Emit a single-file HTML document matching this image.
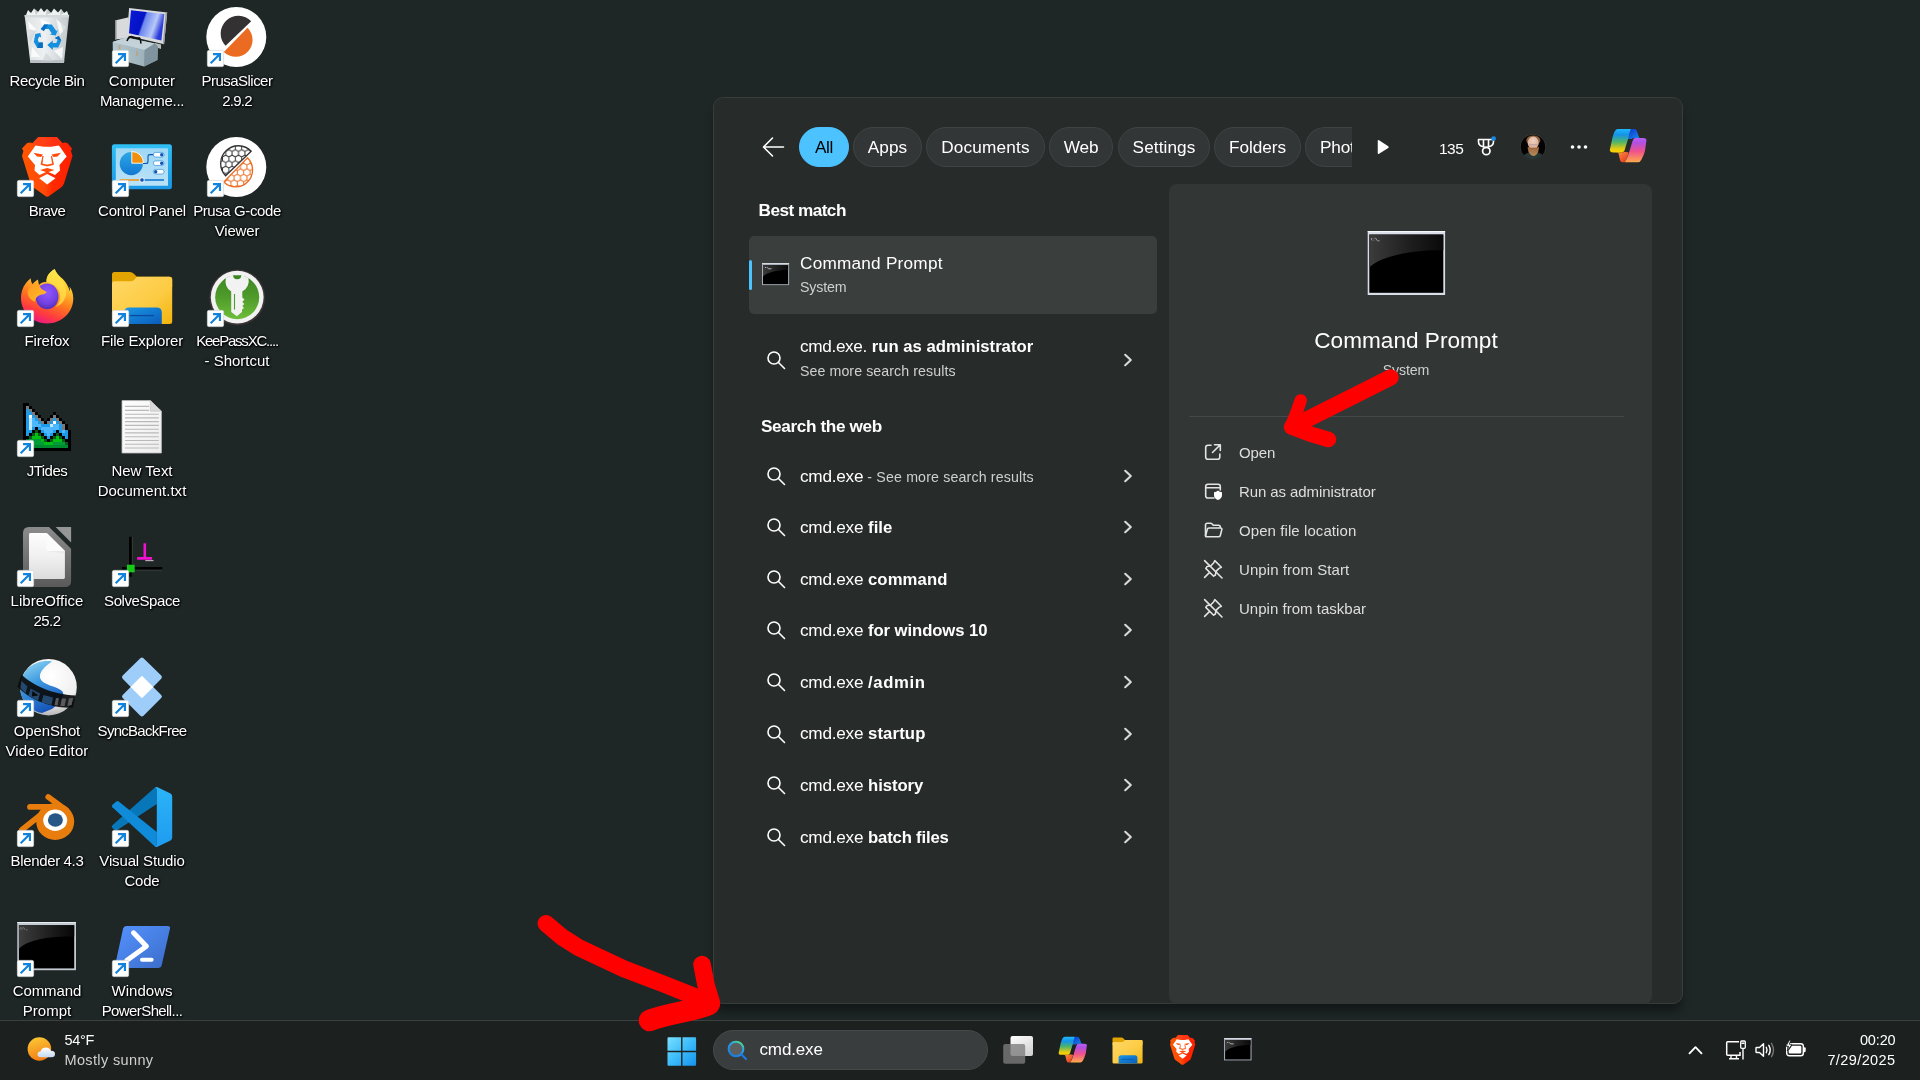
<!DOCTYPE html>
<html lang="en"><head><meta charset="utf-8"><title>Desktop - Search cmd.exe</title>
<style>
*{box-sizing:border-box;margin:0;padding:0}
html,body{width:1920px;height:1080px;overflow:hidden;background:#1e2626}
body{font-family:"Liberation Sans",sans-serif;color:#fff;-webkit-font-smoothing:antialiased}
#desk{position:relative;width:1920px;height:1080px;overflow:hidden;will-change:transform}
.abs{position:absolute}
svg{display:block;overflow:visible}
symbol{overflow:visible}
/* desktop icons */
.di{position:absolute;width:96px;height:110px}
.di .ic{position:absolute;left:18px;top:0;width:60px;height:60px}
.di .ic svg{width:60px;height:60px}
.di .sc{position:absolute;left:19px;top:43px;width:17px;height:17px}
.di .lb{position:absolute;left:-9px;width:116px;top:64px;text-align:center;font-size:15px;line-height:20px;color:#fff;text-shadow:0 1px 2px #000,1px 1px 2px #000,0 0 3px rgba(0,0,0,.8);white-space:nowrap}
/* search panel */
#panel{position:absolute;left:713px;top:97px;width:970px;height:907px;background:#272b2a;border-radius:10px;border:1px solid #383c3b;box-shadow:0 9px 10px -2px rgba(0,0,0,.4)}
#card{position:absolute;left:1169px;top:184px;width:483px;height:819.5px;background:#323635;border-radius:8px}
.pill{position:absolute;top:127px;height:40px;border-radius:20px;background:#333636;border:1px solid #3f4343;font-size:17.2px;line-height:38px;text-align:center;color:#fff;white-space:nowrap;overflow:hidden}
.pill.on{background:#4cc2ff;border-color:#4cc2ff;color:#000}
.t{position:absolute;white-space:nowrap;line-height:1}
.hd{font-weight:bold;font-size:17.2px}
.r1{font-size:17.2px}
.r2{font-size:14.2px;color:#cfd0d0}
.act{font-size:15px;color:#dedede}
b{font-weight:bold;font-size:16.7px}
/* taskbar */
#tb{position:absolute;left:0;top:1020px;width:1920px;height:60px;background:#1c201f;border-top:1px solid #3b3f3e}
#sbox{position:absolute;left:713px;top:1030px;width:275px;height:40px;border-radius:20px;background:#3a3d3d;border:1px solid #464949}
.tt{font-size:14.5px}

</style></head>
<body>
<svg width="0" height="0" style="position:absolute"><defs>
<linearGradient id="g-bin" x1="0" y1="0" x2="1" y2="0"><stop offset="0" stop-color="#dde1e3"/><stop offset=".45" stop-color="#eef1f2"/><stop offset="1" stop-color="#bfc5c8"/></linearGradient>
<symbol id="i-recycle" viewBox="0 0 60 60">
<path d="M10 8 L12 3 L15 6 L18 1.5 L22 5 L25 1 L28 5 L31 2 L35 6 L38 1.5 L42 5.5 L45 2 L48 6 L51 4 L52.5 8 Z" fill="#eef1f2"/>
<path d="M18 1.5 L22 5 L20 8 Z M31 2 L35 6 L30 8Z M45 2 L48 6 L44 8Z" fill="#c5cacc"/>
<path d="M8.6 8 L53.2 8 L48 55.5 L14.3 55.5 Z" fill="url(#g-bin)"/>
<path d="M8.6 8 L53.2 8 L52.9 10.5 L8.9 10.5 Z" fill="#d4d9db"/>
<path d="M14 53 L48.3 53 L48 56 L14.3 56 Z" fill="#b9bfc2"/>
<path d="M12 14 L20 22 L14 30 Z M40 12 L50 20 L44 28 Z M16 40 L24 50 L15 50 Z M38 44 L47 40 L46 52 Z M24 12 L34 16 L27 22Z" fill="#fff" opacity=".8"/>
<path d="M44 14 L51 12 L49 30 Z M20 24 L14 36 L13 22Z M30 46 L38 54 L26 54Z" fill="#cdd3d6" opacity=".7"/>
<g transform="translate(30.8 31)">
<path d="M-6 -9 L-2.5 -13.5 L5 -13.5 L9.5 -7 L11 -8 L9 -2.5 L3 -3.5 L5 -4.5 L2 -9 L-1.5 -9 L-3 -7 Z" fill="#1490df"/>
<path d="M-6 -9 L-2.5 -13.5 L1.5 -13.5 L-3 -7 Z" fill="#0a6fc2"/>
<path d="M-6.5 -5 L-11.5 -4 L-13 4 L-9.5 10 L-4 10 L-4 4.5 L-8 4.5 L-9 1.5 L-7.5 -1.5 L-5.5 -0.5 Z" fill="#1490df"/>
<path d="M-9.500 10 L-4 10 L-4 4.5 L-8 4.5 Z" fill="#0a6fc2"/>
<path d="M0.500 7 L6 2.500 L6 5 L9.500 5 L11 1.500 L8 0 L12 -2 L14.500 2.500 L11.500 9.500 L6 9.500 L6 12 Z" fill="#1490df"/>
<path d="M8 0 L12 -2 L14.500 2.500 L11 1.500 Z" fill="#0a6fc2"/>
</g>
</symbol>
<linearGradient id="g-scr" x1="0" y1="0" x2="1" y2="0.3"><stop offset="0" stop-color="#0a1bd8"/><stop offset=".45" stop-color="#0512c4"/><stop offset=".5" stop-color="#6a86ee"/><stop offset=".8" stop-color="#b8c8f8"/><stop offset="1" stop-color="#2a3ad8"/></linearGradient>
<linearGradient id="g-tb" x1="0" y1="0" x2="1" y2="0"><stop offset="0" stop-color="#b4c6cd"/><stop offset=".7" stop-color="#9db2bb"/><stop offset="1" stop-color="#6f858f"/></linearGradient>
<symbol id="i-compmgmt" viewBox="0 0 60 60">
<path d="M4 13.500 L17.700 10.300 L17.700 31 L4 32.500 Z" fill="#d8dadb"/><path d="M4 13.500 L5.500 13.200 L5.500 32.300 L4 32.500Z" fill="#8d9092"/>
<path d="M18.100 1 L56.200 5.400 L53.100 37.300 L15.900 28.400 Z" fill="#d9dbdc"/>
<path d="M54.700 5.200 L56.200 5.400 L53.100 37.300 L51.800 37 Z" fill="#9a9d9e"/>
<path d="M20 3.200 L53.300 7.100 L50.400 33.500 L18 26.300 Z" fill="url(#g-scr)"/>
<path d="M44 36 L50 37.500 L50 42 L44 40 Z" fill="#b9bcbd"/>
<path d="M1.700 35 L15 30.500 L44 36.500 L47 40 L46.500 53 L33 59.500 L1.900 51 Z" fill="url(#g-tb)"/>
<path d="M1.700 35 L15 30.500 L44 36.500 L33.500 43 Z" fill="#c3d2d8"/>
<path d="M33.500 43 L44 36.500 L47 40 L46.500 53 L33 59.500 Z" fill="#7f949e"/>
<path d="M16 34 Q18 28.500 22 30 Q26 31.500 28.500 31 Q30.500 35 29.500 36.500" stroke="#111" stroke-width="1.6" fill="none"/>
<rect x="7.500" y="38.500" width="2" height="4" fill="#b7a58c"/><rect x="25" y="44" width="2" height="5" fill="#b7a58c"/>
</symbol>
<symbol id="i-prusa" viewBox="0 0 60 60">
<circle cx="30.300" cy="30" r="30" fill="#fff"/>
<path d="M19.600 38.800 A16 16 0 0 1 45.200 14.200 Z" fill="#333132"/>
<path d="M41.500 20.800 A16.500 16.500 0 0 1 17.800 45 Z" fill="#ec6b22"/>
</symbol>
<pattern id="p-hexd" width="6.400" height="11.085" patternUnits="userSpaceOnUse" patternTransform="translate(0.500 1.500)"><path d="M3.200 0 L6.400 1.848 L6.400 5.543 L3.200 7.390 L0 5.543 L0 1.848 Z M3.200 7.390 V11.085" stroke="#333132" stroke-width="1" fill="none"/></pattern>
<pattern id="p-hexo" width="6.400" height="11.085" patternUnits="userSpaceOnUse" patternTransform="translate(2.500 4)"><path d="M3.200 0 L6.400 1.848 L6.400 5.543 L3.200 7.390 L0 5.543 L0 1.848 Z M3.200 7.390 V11.085" stroke="#ec6b22" stroke-width="1" fill="none"/></pattern>
<symbol id="i-gcode" viewBox="0 0 60 60">
<circle cx="30.300" cy="30" r="30" fill="#fff"/>
<path d="M19.600 38.800 A16 16 0 0 1 45.200 14.200 Z" fill="url(#p-hexd)" stroke="#333132" stroke-width="1.300"/>
<path d="M41.500 20.800 A16.500 16.500 0 0 1 17.800 45 Z" fill="url(#p-hexo)" stroke="#ec6b22" stroke-width="1.300"/>
</symbol>
<linearGradient id="g-brave" x1="0" y1="0" x2="1" y2="0"><stop offset="0" stop-color="#ff5500"/><stop offset=".45" stop-color="#ff4a08"/><stop offset=".6" stop-color="#ff2a00"/><stop offset="1" stop-color="#ff1f00"/></linearGradient>
<symbol id="i-brave" viewBox="0 0 60 60">
<path d="M22.300 0 L40.900 0 L46.300 6 Q49 4.800 51.600 6.300 L56 11.500 L55 14 L56.500 19 L48 46.500 Q47 49 45 50.500 L33.500 58.800 Q31.200 60.500 29 58.800 L17.500 50.500 Q15.400 49 14.500 46.500 L6 19 L7.400 14 L6 11.500 L10.800 6.300 Q13.500 4.800 16.600 6 Z" fill="url(#g-brave)"/>
<path d="M22.300 0 L40.900 0 L46.300 6 L41 9 L21.500 9 L16.600 6 Z" fill="#ff3b1f" opacity=".6"/>
<path d="M27.500 9.800 L35 9.800 L43 8.500 L50.700 19.500 L43.500 28 L44 33.500 L39 38 L31.200 34.500 L23.500 38 L18.500 33.500 L19 28 L11.800 19.500 L19.500 8.500 Z" fill="#fff"/>
<path d="M23.200 41.200 L31.200 37 L39.500 41.200 L31.200 47.500 Z" fill="#fff"/>
<path d="M17.500 15.800 L27 17.500 L25 20 L21 19.500 Z M45 15.800 L35.500 17.500 L37.500 20 L41.500 19.500 Z" fill="#ff4a08"/>
<path d="M27 19 L25 27.500 L31.200 29 L37.500 27.500 L35.500 19 L36.500 27 L31.200 28 L26 27 Z" fill="#ff4a08" stroke="#ff4a08" stroke-width=".8"/>
<path d="M24 33 L31.200 31 L38.500 33 L31.200 35.500 Z" fill="#ff4a08"/>
</symbol>
<linearGradient id="g-cpf" x1="0" y1="0" x2="0" y2="1"><stop offset="0" stop-color="#2fc0f5"/><stop offset="1" stop-color="#1a96e4"/></linearGradient>
<linearGradient id="g-cpi" x1="0" y1="0" x2="0" y2="1"><stop offset="0" stop-color="#9fd8f4"/><stop offset="1" stop-color="#b9e2f7"/></linearGradient>
<linearGradient id="g-pie" x1="0" y1="0" x2="0" y2="1"><stop offset="0" stop-color="#2aa8e8"/><stop offset="1" stop-color="#1278d2"/></linearGradient>
<symbol id="i-cpanel" viewBox="0 0 60 60">
<rect x="0.900" y="7.200" width="60" height="45" rx="2.500" fill="url(#g-cpf)"/>
<rect x="4.800" y="11.200" width="52.200" height="37.600" rx="0.500" fill="url(#g-cpi)"/>
<circle cx="20.300" cy="26.600" r="11.600" fill="url(#g-pie)"/>
<path d="M20.800 26.200 L20.800 14.500 A11.700 11.700 0 0 1 32.500 26.200 Z" fill="#f0900c" stroke="#fff" stroke-width=".9"/>
<path d="M32 26.500 H35 Q37 26.500 37 24.500 V19.500 Q37 17.600 39 17.600 H43" stroke="#0c55b5" stroke-width="1.100" fill="none"/>
<rect x="42.300" y="15.400" width="10.800" height="4.600" rx="2.300" fill="#fff" stroke="#1b7fd8" stroke-width=".6"/><circle cx="50.700" cy="17.700" r="1.700" fill="#0c55b5"/>
<rect x="42.300" y="23.900" width="10.800" height="4.600" rx="2.300" fill="#fff" stroke="#1b7fd8" stroke-width=".6"/><circle cx="50.700" cy="26.200" r="1.700" fill="#0c55b5"/>
<rect x="42.300" y="32.400" width="10.800" height="4.600" rx="2.300" fill="#fff" stroke="#1b7fd8" stroke-width=".6"/><circle cx="44.700" cy="34.700" r="1.700" fill="#0c55b5"/>
<path d="M8.800 43 H31" stroke="#f0900c" stroke-width="1.500"/><path d="M31 43 H53" stroke="#0c6fd0" stroke-width="1.500"/>
<circle cx="31" cy="43" r="2.300" fill="#0c55b5" stroke="#fff" stroke-width=".9"/>
</symbol>
<linearGradient id="g-ff" x1="0.7" y1="0" x2="0.3" y2="1"><stop offset="0" stop-color="#fff44f"/><stop offset=".3" stop-color="#ffbd2e"/><stop offset=".55" stop-color="#ff7a1c"/><stop offset=".8" stop-color="#ff3a40"/><stop offset="1" stop-color="#e6168c"/></linearGradient>
<radialGradient id="g-ffg" cx="0.5" cy="0.35" r="0.7"><stop offset="0" stop-color="#9059ff"/><stop offset=".6" stop-color="#7542e5"/><stop offset="1" stop-color="#4a2aa8"/></radialGradient>
<linearGradient id="g-ffh" x1="0" y1="0" x2="1" y2="1"><stop offset="0" stop-color="#ff9a1f"/><stop offset="1" stop-color="#ffbd2e"/></linearGradient>
<symbol id="i-firefox" viewBox="0 0 60 60">
<path d="M38.700 1.900 C33 5 30 10 30.500 15 C27 14.500 24 16.500 23 18 L21.900 12.500 C20 13.500 17.500 15.500 16.500 17.500 C15.500 15.500 14.800 13.500 14.800 11.200 C9 15.500 5 22.500 5 31 C5 45.500 17 56.500 31.200 56.500 C45.500 56.500 57.300 45.500 57.300 31.500 C57.300 26 55.500 22 53.500 19.500 C54 21.500 54 23 53.800 24.500 C52 17 47.500 12.500 44 9.500 C41.500 7 39.500 4.500 38.700 1.900 Z" fill="url(#g-ff)"/>
<path d="M38.700 1.900 C33 5 30 10 30.500 15 C35 15.500 40 18 42.500 22.500 C45.500 28 44.500 35.500 39.500 40 C46 38 51.500 31.500 50 22 C48.500 15.500 42 10.500 38.700 1.900 Z" fill="#ffe14a" opacity=".75"/>
<ellipse cx="31" cy="29.400" rx="11.500" ry="12.800" fill="url(#g-ffg)"/>
<path d="M16.100 16.900 C19 16.300 21.500 17.300 23.200 18.700 C24.500 20 25 21.500 25.900 22.200 C27.500 23.500 29.800 23.800 30.700 25.300 C29 27.300 26 27.500 24.100 28 C22 28.800 20.500 30 20.100 31.100 C19.300 32.500 19.100 33.500 19.300 35 C14.500 33 12 30 11.700 26.600 C11.500 25 11.800 24 12.200 23.100 C13.500 21.500 14.500 19 16.100 16.900 Z" fill="url(#g-ffh)"/>
</symbol>
<linearGradient id="g-fold" x1="0" y1="0" x2="1" y2="1"><stop offset="0" stop-color="#ffd866"/><stop offset=".6" stop-color="#fccb42"/><stop offset="1" stop-color="#f3b30c"/></linearGradient>
<linearGradient id="g-fpk" x1="0" y1="0" x2="1" y2="1"><stop offset="0" stop-color="#1a98e6"/><stop offset="1" stop-color="#0a5cba"/></linearGradient>
<symbol id="i-explorer" viewBox="0 0 60 60">
<path d="M1 7.500 Q1 5 3.500 5 L19 5 Q21 5 22.500 6.500 L26 9.800 L58.500 9.800 Q61.200 9.800 61.200 12.500 L61.200 20 L1 20 Z" fill="#e3a400"/>
<path d="M1 16.500 Q1 14.200 3.500 14.200 L19.500 14.200 Q21.500 14.200 23 13 L26 9.800 L58.500 9.800 Q61.200 9.800 61.200 12.500 L61.200 54.400 Q61.200 56.900 58.700 56.900 L3.500 56.900 Q1 56.900 1 54.400 Z" fill="url(#g-fold)"/>
<path d="M13.200 56.900 L13.200 45.500 Q13.200 40.400 18.300 40.400 L45.700 40.400 Q50.800 40.400 50.800 45.500 L50.800 56.900 Z" fill="url(#g-fpk)"/>
<path d="M18.500 48.600 H43" stroke="#0a4a9c" stroke-width="1.300"/>
</symbol>
<linearGradient id="g-kp" x1="0" y1="0" x2="0" y2="1"><stop offset="0" stop-color="#3d8623"/><stop offset=".5" stop-color="#4f9b2b"/><stop offset="1" stop-color="#6ebd3a"/></linearGradient>
<symbol id="i-keepass" viewBox="0 0 60 60">
<circle cx="31.200" cy="30.500" r="28" fill="#3a3434"/>
<circle cx="31.200" cy="30.200" r="26.400" fill="#f2f2f2"/>
<circle cx="31.200" cy="30.200" r="22" fill="url(#g-kp)"/>
<path d="M20 11 A11.800 11.800 0 0 0 25.200 24.500 L25.200 45 L30.800 49.300 L36 45 L36 42.500 L38 41 L36.300 39 L38.300 37 L36.300 35 L38.500 32.500 L36.300 30.500 L36.300 24.500 A11.800 11.800 0 0 0 42.400 11 A22 22 0 0 0 20 11 Z" fill="#f2f2f2"/>
<path d="M27.100 8.200 A4.100 4.100 0 0 0 35.300 8.200 Z" fill="#3d8623"/>
<path d="M28.500 27 V42.600" stroke="#4f9b2b" stroke-width="1.100"/>
</symbol>
<linearGradient id="g-pg" x1="0" y1="0" x2="1" y2="1"><stop offset="0" stop-color="#ffffff"/><stop offset="1" stop-color="#ececec"/></linearGradient>
<symbol id="i-textdoc" viewBox="0 0 60 60">
<path d="M11 3.600 L39.300 3.600 L50.400 14.200 L50.400 56 L11 56 Z" fill="url(#g-pg)" stroke="#bdbdbd" stroke-width=".8"/>
<path d="M39.300 3.600 L39.300 14.200 L50.400 14.200 Z" fill="#d9d9d9" stroke="#bdbdbd" stroke-width=".6"/>
<path d="M14 9.400 H38 M14 13.400 H38 M14 17.300 H47.800 M14 20.900 H47.800 M14 24.600 H47.800 M14 28.400 H47.800 M14 32.200 H47.800 M14 35.900 H47.800 M14 39.700 H47.800 M14 43.500 H47.800 M14 47.200 H47.800 M14 51 H47.800" stroke="#b9b9b9" stroke-width="1.100"/>
</symbol>
<linearGradient id="g-lo" x1="0" y1="0" x2="0" y2="1"><stop offset="0" stop-color="#8c8c8c"/><stop offset="1" stop-color="#5a5a5a"/></linearGradient>
<linearGradient id="g-lop" x1="0" y1="0" x2="0" y2="1"><stop offset="0" stop-color="#fdfdfd"/><stop offset=".5" stop-color="#f1f1f1"/><stop offset="1" stop-color="#dcdcdc"/></linearGradient>
<symbol id="i-libre" viewBox="0 0 60 60">
<path d="M13 0 L33 0 L55.100 21.800 L55.100 54 Q55.100 60 49 60 L13 60 Q7 60 7 54 L7 6 Q7 0 13 0 Z" fill="url(#g-lo)"/>
<path d="M39.600 0 L55.100 0 L55.100 15.600 Z" fill="#969696"/>
<path d="M14.500 6.100 L30.700 6.100 L48.900 24 L48.900 50.500 Q48.900 51.900 47.500 51.900 L14.500 51.900 Q13 51.900 13 50.500 L13 7.500 Q13 6.100 14.500 6.100 Z" fill="url(#g-lop)"/>
<path d="M30.700 6.100 L30.700 22 Q30.700 24 32.700 24 L48.900 24 Z" fill="#fbfbfb"/>
<path d="M30.700 24 L48.900 24 L48.900 27 Z" fill="#e4e4e4" opacity=".6"/>
</symbol>
<symbol id="i-solvespace" viewBox="0 0 60 60">
<path d="M19.400 9.800 V49.700 M11 41.300 H51.300" stroke="#000" stroke-width="2.600"/>
<path d="M21.500 9.800 V37 M24 43.400 H51.300" stroke="#3c3c3c" stroke-width=".8"/>
<rect x="15.900" y="37.700" width="7.800" height="7.600" fill="#18c818"/>
<path d="M34.300 33.600 H42.500" stroke="#b9a8b9" stroke-width="1.200"/>
<path d="M33.800 16.200 V31.500 M26.100 31.400 H41.100" stroke="#f010d0" stroke-width="2.600"/>
</symbol>
<radialGradient id="g-os" cx="0.55" cy="0.3" r="0.75"><stop offset="0" stop-color="#ffffff"/><stop offset=".65" stop-color="#f0f0f0"/><stop offset="1" stop-color="#a8a8a8"/></radialGradient>
<linearGradient id="g-osb" x1="0.2" y1="0" x2="0.6" y2="1"><stop offset="0" stop-color="#8fd4f2"/><stop offset=".4" stop-color="#3f9be0"/><stop offset="1" stop-color="#1450b8"/></linearGradient>
<clipPath id="c-os"><circle cx="32.500" cy="30.200" r="28.300"/></clipPath>
<symbol id="i-openshot" viewBox="0 0 60 60">
<circle cx="32.500" cy="30.200" r="28.300" fill="url(#g-os)"/>
<g clip-path="url(#c-os)">
<path d="M36 4.500 C28 10 22 16 24.500 22 C27 28 40 29 46 34 C50 38 44 46 36 52 L26 56 C14 54 2 42 4 28 C6 12 20 2 36 4.500 Z" fill="url(#g-osb)"/>
</g>
<path d="M5.500 17.500 C16 28 36 37.500 59.500 38.500 L57 50.500 C36 52 12 42 1.500 29.500 Z" fill="#0b0b0b" opacity=".92"/>
<path d="M5.500 24 L11.500 29.500 L9.500 36.500 L4.500 31 Z M14.500 31.500 L24 36.500 L22 44 L12.500 38.500 Z M27.500 38 L37 40.500 L35.500 48 L25.500 45.500 Z M46 41.500 L50 41.800 L48.500 49 L44.500 49 Z M53 41.500 L57 41 L55.500 48 L51.500 48.800 Z" fill="#24496e"/>
<path d="M46 41.500 L50 41.800 L48.500 49 L44.500 49 Z M53 41.500 L57 41 L55.500 48 L51.500 48.800 Z M40 41 L43 41.300 L41.500 48.600 L38.500 48.300 Z" fill="#5a5a5a"/>
<path d="M16.500 34 L22.500 38.500 L15.800 39.500 Z" fill="#0b0b0b"/>
</symbol>
<symbol id="i-syncback" viewBox="0 0 60 60">
<path d="M29.300 1.300 Q30.900 -0.300 32.500 1.300 L50.200 18.600 Q51.800 20.200 50.200 21.800 L32.500 39.700 Q30.900 41.300 29.300 39.700 L11.700 21.800 Q10.100 20.200 11.700 18.600 Z" fill="#9fcdf9"/>
<path d="M29.300 20.300 Q30.900 18.700 32.500 20.300 L50.200 37.900 Q51.800 39.500 50.200 41.100 L32.500 58.700 Q30.900 60.300 29.300 58.700 L11.700 41.100 Q10.100 39.500 11.700 37.900 Z" fill="#9fcdf9"/>
<path d="M30.900 18.700 L42.300 30 L30.900 41.300 L19.600 30 Z" fill="#fff"/>
</symbol>
<symbol id="i-blender" viewBox="0 0 60 60">
<g stroke="#e87d0d" stroke-width="5.800" stroke-linecap="round" fill="none"><path d="M32.300 10 L50 23"/><path d="M14 19.900 H38"/><path d="M6 42.800 L27 26"/></g>
<ellipse cx="39.200" cy="34.600" rx="19" ry="18.400" fill="#e87d0d"/>
<ellipse cx="39.200" cy="33.300" rx="12" ry="10.700" fill="#fff"/>
<ellipse cx="39.400" cy="33" rx="7.500" ry="6.700" fill="#265787"/>
</symbol>
<linearGradient id="g-vs1" x1="0" y1="0" x2="0" y2="1"><stop offset="0" stop-color="#2bb3f7"/><stop offset="1" stop-color="#1f9cf0"/></linearGradient>
<symbol id="i-vscode" viewBox="0 0 60 60">
<path d="M44.200 0.200 L45.800 1 L45.800 17 L6 43.200 Q4.500 44 3.300 42.800 L1.200 40.800 Q0 39.500 1.400 38.200 Z" fill="#0877b9"/>
<path d="M1.400 20.200 Q0.200 19 1.500 17.800 L5.300 14.600 Q6.600 13.600 8 14.700 L45.800 45 L45.800 59 L44.200 59.800 Z" fill="#0f8bd9"/>
<path d="M44.200 0.200 Q45.200 -0.300 46.500 0.300 L59.500 6.600 Q61.200 7.500 61.200 9.500 L61.200 50.500 Q61.200 52.500 59.500 53.400 L46.500 59.700 Q45.200 60.300 44.200 59.800 L45.800 58 L45.800 2 Z" fill="url(#g-vs1)"/>
</symbol>
<linearGradient id="g-cmd" x1="0" y1="0" x2="1" y2="0"><stop offset="0" stop-color="#3e3e3e"/><stop offset=".6" stop-color="#1c1c1c"/><stop offset="1" stop-color="#060606"/></linearGradient>
<symbol id="i-cmd" viewBox="0 0 60 60">
<rect x="1.300" y="5" width="58.700" height="48.200" fill="#c3cad2"/>
<rect x="1.300" y="5" width="58.700" height="1" fill="#e9edf1"/>
<rect x="2.900" y="8.200" width="55.300" height="43.200" fill="#000"/>
<path d="M2.900 8.200 H58.200 V19.600 C30 19 10 24 2.900 32 Z" fill="url(#g-cmd)"/>
<path d="M4.500 10.500 L3.800 11.500 L4.500 12.500 M6 10.300 V12.700 M7.500 10.300 L9 12.700 M10 12.900 H11.500" stroke="#aaa" stroke-width=".6" fill="none"/>
</symbol>
<linearGradient id="g-ps" x1="0" y1="0" x2="1" y2="1"><stop offset="0" stop-color="#5593ff"/><stop offset="1" stop-color="#3a6cc8"/></linearGradient>
<symbol id="i-pshell" viewBox="0 0 60 60">
<path d="M15.300 8.900 L56.800 8.900 Q59.600 8.900 59 11.600 L50.700 48.300 Q50 51 47.200 51 L6.300 51 Q3.500 51 4.100 48.300 L12.100 11.600 Q12.700 8.900 15.300 8.900 Z" fill="url(#g-ps)"/>
<path d="M22.500 15.800 L35.400 29.300 L16 43.300" stroke="#fff" stroke-width="5" fill="none" stroke-linecap="round" stroke-linejoin="round"/>
<path d="M31 42.800 H40.600" stroke="#fff" stroke-width="4" stroke-linecap="round"/>
</symbol>
<symbol id="i-shortcut" viewBox="0 0 18 18"><rect x="0.4" y="0.4" width="17.2" height="17.2" rx="1.6" fill="#fff" stroke="#d6dade" stroke-width=".8"/><path d="M3.900 14.100 L12.900 5.100 M6.400 4.300 H13.700 V11.600" stroke="#1183dd" stroke-width="2.300" fill="none"/></symbol>
<symbol id="i-back" viewBox="0 0 23 22"><path d="M21.5 11 H2 M10.5 2 L1.5 11 L10.5 20" stroke="#fff" stroke-width="1.6" fill="none" stroke-linecap="round" stroke-linejoin="round"/></symbol>
<symbol id="i-play" viewBox="0 0 16 18"><path d="M2 2.2 Q2 0.6 3.5 1.4 L14 8 Q15.2 9 14 10 L3.5 16.6 Q2 17.4 2 15.8 Z" fill="#fff"/></symbol>
<symbol id="i-dots" viewBox="0 0 18 6"><circle cx="2.5" cy="3" r="1.8" fill="#fff"/><circle cx="9" cy="3" r="1.8" fill="#fff"/><circle cx="15.5" cy="3" r="1.8" fill="#fff"/></symbol>
<symbol id="i-search" viewBox="0 0 20 20"><circle cx="8" cy="8" r="6" stroke="#fff" stroke-width="1.6" fill="none"/><path d="M12.5 12.5 L18.5 18.5" stroke="#fff" stroke-width="1.6" stroke-linecap="round"/></symbol>
<symbol id="i-chev" viewBox="0 0 12 16"><path d="M3.200 2.800 L8.800 8 L3.200 13.200" stroke="#dadada" stroke-width="2.100" fill="none" stroke-linecap="round" stroke-linejoin="round"/></symbol>
<symbol id="i-trayup" viewBox="0 0 15 10"><path d="M1.500 8.300 L7.500 2.200 L13.500 8.300" stroke="#fff" stroke-width="1.900" fill="none" stroke-linecap="round" stroke-linejoin="round"/></symbol>
<symbol id="i-jtides" viewBox="0 0 60 60">
<rect x="7" y="6" width="6" height="3" fill="#000"/>
<rect x="7" y="9" width="3" height="3" fill="#000"/>
<rect x="10" y="9" width="3" height="3" fill="#7a7a7a"/>
<rect x="13" y="9" width="3" height="3" fill="#000"/>
<rect x="7" y="12" width="3" height="3" fill="#000"/>
<rect x="10" y="12" width="3" height="3" fill="#1e9be8"/>
<rect x="13" y="12" width="3" height="3" fill="#7a7a7a"/>
<rect x="16" y="12" width="3" height="3" fill="#000"/>
<rect x="7" y="15" width="3" height="3" fill="#000"/>
<rect x="10" y="15" width="6" height="3" fill="#1e9be8"/>
<rect x="16" y="15" width="3" height="3" fill="#7a7a7a"/>
<rect x="19" y="15" width="3" height="3" fill="#000"/>
<rect x="37" y="15" width="3" height="3" fill="#000"/>
<rect x="7" y="18" width="3" height="3" fill="#000"/>
<rect x="10" y="18" width="3" height="3" fill="#1e9be8"/>
<rect x="13" y="18" width="3" height="3" fill="#fff"/>
<rect x="16" y="18" width="3" height="3" fill="#1e9be8"/>
<rect x="19" y="18" width="3" height="3" fill="#7a7a7a"/>
<rect x="22" y="18" width="3" height="3" fill="#000"/>
<rect x="34" y="18" width="3" height="3" fill="#000"/>
<rect x="37" y="18" width="3" height="3" fill="#7a7a7a"/>
<rect x="40" y="18" width="3" height="3" fill="#000"/>
<rect x="7" y="21" width="3" height="3" fill="#000"/>
<rect x="10" y="21" width="3" height="3" fill="#1e9be8"/>
<rect x="13" y="21" width="3" height="3" fill="#c2e8ff"/>
<rect x="16" y="21" width="3" height="3" fill="#4db8ff"/>
<rect x="19" y="21" width="3" height="3" fill="#1e9be8"/>
<rect x="22" y="21" width="3" height="3" fill="#7a7a7a"/>
<rect x="25" y="21" width="3" height="3" fill="#000"/>
<rect x="31" y="21" width="3" height="3" fill="#000"/>
<rect x="34" y="21" width="3" height="3" fill="#7a7a7a"/>
<rect x="37" y="21" width="3" height="3" fill="#1e9be8"/>
<rect x="40" y="21" width="3" height="3" fill="#7a7a7a"/>
<rect x="43" y="21" width="3" height="3" fill="#000"/>
<rect x="7" y="24" width="3" height="3" fill="#000"/>
<rect x="10" y="24" width="3" height="3" fill="#1e9be8"/>
<rect x="13" y="24" width="3" height="3" fill="#c2e8ff"/>
<rect x="16" y="24" width="6" height="3" fill="#4db8ff"/>
<rect x="22" y="24" width="3" height="3" fill="#1e9be8"/>
<rect x="25" y="24" width="3" height="3" fill="#7a7a7a"/>
<rect x="28" y="24" width="3" height="3" fill="#000"/>
<rect x="31" y="24" width="3" height="3" fill="#7a7a7a"/>
<rect x="34" y="24" width="3" height="3" fill="#1e9be8"/>
<rect x="37" y="24" width="3" height="3" fill="#fff"/>
<rect x="40" y="24" width="3" height="3" fill="#1e9be8"/>
<rect x="43" y="24" width="3" height="3" fill="#7a7a7a"/>
<rect x="46" y="24" width="3" height="3" fill="#000"/>
<rect x="7" y="27" width="3" height="3" fill="#000"/>
<rect x="10" y="27" width="3" height="3" fill="#1e9be8"/>
<rect x="13" y="27" width="3" height="3" fill="#c2e8ff"/>
<rect x="16" y="27" width="9" height="3" fill="#4db8ff"/>
<rect x="25" y="27" width="9" height="3" fill="#1e9be8"/>
<rect x="34" y="27" width="3" height="3" fill="#c2e8ff"/>
<rect x="37" y="27" width="6" height="3" fill="#4db8ff"/>
<rect x="43" y="27" width="3" height="3" fill="#1e9be8"/>
<rect x="46" y="27" width="3" height="3" fill="#7a7a7a"/>
<rect x="49" y="27" width="3" height="3" fill="#000"/>
<rect x="7" y="30" width="3" height="3" fill="#000"/>
<rect x="10" y="30" width="3" height="3" fill="#1e9be8"/>
<rect x="13" y="30" width="3" height="3" fill="#c2e8ff"/>
<rect x="16" y="30" width="3" height="3" fill="#1e9be8"/>
<rect x="19" y="30" width="3" height="3" fill="#000"/>
<rect x="22" y="30" width="3" height="3" fill="#1e9be8"/>
<rect x="25" y="30" width="18" height="3" fill="#4db8ff"/>
<rect x="43" y="30" width="3" height="3" fill="#1e9be8"/>
<rect x="46" y="30" width="3" height="3" fill="#7a7a7a"/>
<rect x="49" y="30" width="3" height="3" fill="#000"/>
<rect x="7" y="33" width="3" height="3" fill="#000"/>
<rect x="10" y="33" width="6" height="3" fill="#1e9be8"/>
<rect x="16" y="33" width="3" height="3" fill="#000"/>
<rect x="19" y="33" width="3" height="3" fill="#0a5a1e"/>
<rect x="22" y="33" width="3" height="3" fill="#000"/>
<rect x="25" y="33" width="3" height="3" fill="#1e9be8"/>
<rect x="28" y="33" width="9" height="3" fill="#4db8ff"/>
<rect x="37" y="33" width="3" height="3" fill="#1e9be8"/>
<rect x="40" y="33" width="3" height="3" fill="#000"/>
<rect x="43" y="33" width="3" height="3" fill="#1e9be8"/>
<rect x="46" y="33" width="3" height="3" fill="#4db8ff"/>
<rect x="49" y="33" width="3" height="3" fill="#1e9be8"/>
<rect x="52" y="33" width="3" height="3" fill="#000"/>
<rect x="7" y="36" width="3" height="3" fill="#000"/>
<rect x="10" y="36" width="3" height="3" fill="#1e9be8"/>
<rect x="13" y="36" width="3" height="3" fill="#000"/>
<rect x="16" y="36" width="3" height="3" fill="#0a5a1e"/>
<rect x="19" y="36" width="3" height="3" fill="#00c010"/>
<rect x="22" y="36" width="3" height="3" fill="#0a5a1e"/>
<rect x="25" y="36" width="3" height="3" fill="#000"/>
<rect x="28" y="36" width="3" height="3" fill="#1e9be8"/>
<rect x="31" y="36" width="3" height="3" fill="#4db8ff"/>
<rect x="34" y="36" width="3" height="3" fill="#1e9be8"/>
<rect x="37" y="36" width="3" height="3" fill="#000"/>
<rect x="40" y="36" width="3" height="3" fill="#0a5a1e"/>
<rect x="43" y="36" width="3" height="3" fill="#000"/>
<rect x="46" y="36" width="6" height="3" fill="#1e9be8"/>
<rect x="52" y="36" width="3" height="3" fill="#000"/>
<rect x="7" y="39" width="6" height="3" fill="#000"/>
<rect x="13" y="39" width="3" height="3" fill="#0a5a1e"/>
<rect x="16" y="39" width="9" height="3" fill="#00c010"/>
<rect x="25" y="39" width="3" height="3" fill="#0a5a1e"/>
<rect x="28" y="39" width="3" height="3" fill="#000"/>
<rect x="31" y="39" width="3" height="3" fill="#1e9be8"/>
<rect x="34" y="39" width="3" height="3" fill="#000"/>
<rect x="37" y="39" width="3" height="3" fill="#0a5a1e"/>
<rect x="40" y="39" width="3" height="3" fill="#00c010"/>
<rect x="43" y="39" width="3" height="3" fill="#0a5a1e"/>
<rect x="46" y="39" width="3" height="3" fill="#000"/>
<rect x="49" y="39" width="3" height="3" fill="#1e9be8"/>
<rect x="52" y="39" width="3" height="3" fill="#000"/>
<rect x="7" y="42" width="3" height="3" fill="#000"/>
<rect x="10" y="42" width="3" height="3" fill="#0a5a1e"/>
<rect x="13" y="42" width="12" height="3" fill="#009a38"/>
<rect x="25" y="42" width="3" height="3" fill="#00c010"/>
<rect x="28" y="42" width="3" height="3" fill="#0a5a1e"/>
<rect x="31" y="42" width="3" height="3" fill="#000"/>
<rect x="34" y="42" width="3" height="3" fill="#0a5a1e"/>
<rect x="37" y="42" width="9" height="3" fill="#00c010"/>
<rect x="46" y="42" width="3" height="3" fill="#0a5a1e"/>
<rect x="49" y="42" width="6" height="3" fill="#000"/>
<rect x="7" y="45" width="3" height="3" fill="#000"/>
<rect x="10" y="45" width="18" height="3" fill="#009a38"/>
<rect x="28" y="45" width="9" height="3" fill="#00c010"/>
<rect x="37" y="45" width="12" height="3" fill="#009a38"/>
<rect x="49" y="45" width="3" height="3" fill="#0a5a1e"/>
<rect x="52" y="45" width="3" height="3" fill="#000"/>
<rect x="7" y="48" width="3" height="3" fill="#000"/>
<rect x="10" y="48" width="42" height="3" fill="#008a30"/>
<rect x="52" y="48" width="3" height="3" fill="#000"/>
<rect x="7" y="51" width="48" height="3" fill="#000"/>
</symbol>
<linearGradient id="g-cmd2" x1="0" y1="0" x2="1" y2="0"><stop offset="0" stop-color="#3c3c3c"/><stop offset=".55" stop-color="#1e1e1e"/><stop offset="1" stop-color="#0a0a0a"/></linearGradient>
<symbol id="i-cmdlg" viewBox="0 0 79 65">
<rect x="0.700" y="1" width="77.400" height="64" fill="#d9dde8"/>
<rect x="0.700" y="1" width="77.400" height="1.200" fill="#f4f6fa"/>
<rect x="2.300" y="4.600" width="74" height="58.200" fill="#000"/>
<path d="M2.300 4.600 H76.300 V20.300 C44 20 14 26 2.300 37.400 Z" fill="url(#g-cmd2)"/>
<path d="M5 8 L4.300 9.200 L5 10.400 M7 8.200 V8.800 M7 9.800 V10.400 M8.500 7.800 L10 10.600 M10.500 10.800 H12.500" stroke="#bdbdbd" stroke-width=".8" fill="none"/>
</symbol>
<symbol id="i-cmdsm" viewBox="0 0 27 22">
<rect x="0" y="0.100" width="27.100" height="22" fill="#a9aeb9"/>
<rect x="0" y="0.100" width="27.100" height="0.800" fill="#e4e7ee"/>
<rect x="1" y="2.200" width="25.100" height="19" fill="#000"/>
<path d="M1 2.200 H26.100 V7 C15 7 5 9.500 1 13.500 Z" fill="url(#g-cmd2)"/>
<path d="M3 4.500 H4.200 M5 4.200 L6.500 5.800 H9.500" stroke="#d0d0d0" stroke-width=".8" fill="none"/>
</symbol>
<symbol id="i-trophy" viewBox="0 0 22 24">
<path d="M2.500 4.500 H17.500 V6.500 Q17.500 10.500 13.500 11.500 L10 12.500 L6.500 11.500 Q2.500 10.500 2.500 6.500 Z M7.500 4.500 V11.500 M12.500 4.500 V11.500" stroke="#fff" stroke-width="1.600" fill="none" stroke-linejoin="round"/>
<circle cx="10.300" cy="16" r="3.700" stroke="#fff" stroke-width="1.700" fill="none"/>
<circle cx="17.600" cy="3.600" r="2.400" fill="#1a86e8"/>
</symbol>
<radialGradient id="g-face" cx="0.5" cy="0.35" r="0.65"><stop offset="0" stop-color="#f0d2c2"/><stop offset="1" stop-color="#d3a890"/></radialGradient>
<linearGradient id="g-beard" x1="0" y1="0" x2="0" y2="1"><stop offset="0" stop-color="#9a6236"/><stop offset="1" stop-color="#b48c5c"/></linearGradient>
<clipPath id="c-av"><circle cx="13" cy="13" r="12.400"/></clipPath>
<symbol id="i-avatar" viewBox="0 0 26 26">
<circle cx="13" cy="13" r="12.900" fill="#3a3f3e"/>
<circle cx="13" cy="13" r="12.300" fill="#030303"/>
<g clip-path="url(#c-av)">
<path d="M2 26 Q3 19.500 9 18.600 H17.500 Q23.500 19.500 24.500 26 Z" fill="#283635"/>
<ellipse cx="13.300" cy="6.300" rx="7" ry="4.900" fill="#8a5c38"/>
<ellipse cx="13.200" cy="9" rx="5.500" ry="6.500" fill="url(#g-face)"/>
<path d="M8.200 10.400 Q13.200 9.400 18.200 10.400 L18 11.600 Q13.200 10.800 8.400 11.600 Z" fill="#a68a92" opacity=".55"/>
<path d="M7.700 12.800 Q10 14.300 13.300 13.600 Q16.500 14.300 18.900 12.800 Q19 18.500 16 21 Q13.400 23 11 21 Q7.600 18.500 7.700 12.800 Z" fill="url(#g-beard)"/>
<path d="M11.300 16.500 Q13 15.900 14.700 16.500 Q13 17.300 11.300 16.500 Z" fill="#c8807a"/>
</g>
</symbol>
<linearGradient id="g-cpL" x1="0" y1="0" x2="0" y2="1"><stop offset="0" stop-color="#1fb8ff"/><stop offset=".25" stop-color="#1493e8"/><stop offset=".55" stop-color="#4fb46a"/><stop offset=".85" stop-color="#e6cc10"/><stop offset="1" stop-color="#ffd400"/></linearGradient>
<linearGradient id="g-cpR" x1="0" y1="0" x2="0" y2="1"><stop offset="0" stop-color="#b660f8"/><stop offset=".2" stop-color="#b24fe0"/><stop offset=".55" stop-color="#f0528c"/><stop offset="1" stop-color="#ffaa4a"/></linearGradient>
<linearGradient id="g-cpB" x1="0" y1="0" x2="1" y2="1"><stop offset="0" stop-color="#0a34cc"/><stop offset="1" stop-color="#1a8cf0"/></linearGradient>
<linearGradient id="g-cpO" x1="0" y1="0" x2="1" y2="1"><stop offset="0" stop-color="#ff9a44"/><stop offset="1" stop-color="#e2301c"/></linearGradient>
<symbol id="i-copilot" viewBox="0 0 38 38">
<path d="M22.100 0.900 H25.500 Q27.800 0.900 28.600 4.200 L30.200 9 Q30.600 10.200 32 10.200 H25.500 Q23.500 10.200 23 11 L19 11 C19.800 7 21 3.500 22.100 0.900 Z" fill="url(#g-cpB)"/>
<path d="M9.600 25.500 Q8.500 24.700 6.500 24.700 H13 Q15 24.700 15.800 24 L20 24.800 C19 28 17.800 31.500 16.100 34.700 H13.500 Q11.500 34.500 10.800 31 Z" fill="url(#g-cpO)"/>
<path d="M9.100 0.900 H22.100 C21 3.500 20.300 6.500 19.800 9.300 L16.500 19.900 C16 22 15.500 23.500 14.200 24.300 Q13.500 24.700 12.500 24.700 H4.500 C1.500 24.700 0.300 23.500 1 21.300 L3.600 9.300 C4.200 7 5 4.800 5.900 3.300 Q7 0.900 9.100 0.900 Z" fill="url(#g-cpL)"/>
<path d="M26.300 10.200 H34.500 C37 10.200 38.300 11.300 37.800 13 L36.400 22.700 C35.500 26.500 34 29.800 32.700 32 Q31.500 34.700 29 34.700 H16.100 C17.600 32 19 29 19.800 26.400 L22.600 17.100 C23.200 15 23.700 13.300 24.400 12 Q25 10.200 26.300 10.200 Z" fill="url(#g-cpR)"/>
</symbol>
<symbol id="i-open" viewBox="0 0 20 20">
<path d="M8 3.200 H5 Q2.700 3.200 2.700 5.500 V15 Q2.700 17.300 5 17.300 H14.500 Q16.800 17.300 16.800 15 V12" stroke="#e4e4e4" stroke-width="1.600" fill="none" stroke-linecap="round"/>
<path d="M11.500 2.700 H17.300 V8.500 M17 3 L9.500 10.500" stroke="#e4e4e4" stroke-width="1.600" fill="none" stroke-linecap="round" stroke-linejoin="round"/>
</symbol>
<symbol id="i-runas" viewBox="0 0 20 20">
<path d="M11 17 H5 Q2.700 17 2.700 14.700 V5.500 Q2.700 3.200 5 3.200 H15 Q17.300 3.200 17.300 5.500 V9 M2.700 6.700 H17.300" stroke="#e4e4e4" stroke-width="1.600" fill="none" stroke-linecap="round"/>
<path d="M15 9.500 Q16.800 11 19 11.200 V14 Q19 17.500 15 19 Q11 17.500 11 14 V11.200 Q13.200 11 15 9.500 Z" fill="#fff"/>
</symbol>
<symbol id="i-folder" viewBox="0 0 20 20">
<path d="M2.500 16 V5 Q2.500 3.200 4.300 3.200 H7.500 Q8.500 3.200 9.200 4 L10.300 5.200 H15.500 Q17.300 5.200 17.300 7 V8" stroke="#e4e4e4" stroke-width="1.600" fill="none" stroke-linejoin="round"/>
<path d="M2.500 16 L4.300 9.300 Q4.600 8 6 8 H17.500 Q19.200 8 18.800 9.600 L17.300 15.500 Q17 16.800 15.500 16.800 H3.300 Q2.500 16.800 2.500 16 Z" stroke="#e4e4e4" stroke-width="1.600" fill="none" stroke-linejoin="round"/>
</symbol>
<symbol id="i-unpin" viewBox="0 0 20 20">
<path d="M11.500 3 L17 8.500 L15 9.500 L12.500 12 L12 15 L10.500 16 L4 9.500 L5 8 L8 7.500 L10.500 5 Z M7.200 12.800 L3 17" stroke="#e4e4e4" stroke-width="1.300" fill="none" stroke-linejoin="round" stroke-linecap="round"/>
<path d="M3 3 L17.500 17.500" stroke="#e4e4e4" stroke-width="1.300" stroke-linecap="round"/>
</symbol>
<linearGradient id="g-win" x1="0" y1="0" x2="1" y2="1"><stop offset="0" stop-color="#7ae0ff"/><stop offset=".5" stop-color="#3cbcfa"/><stop offset="1" stop-color="#1592ee"/></linearGradient>
<symbol id="i-start" viewBox="0 0 30 30">
<path d="M0.500 2.500 Q0.500 1.500 1.500 1.500 H14.300 V15.300 H0.500 Z M15.700 1.500 H28.500 Q29.500 1.500 29.500 2.500 V15.300 H15.700 Z M0.500 16.700 H14.300 V30.500 H1.500 Q0.500 30.500 0.500 29.500 Z M15.700 16.700 H29.500 V29.500 Q29.500 30.500 28.500 30.500 H15.700 Z" fill="url(#g-win)"/>
</symbol>
<linearGradient id="g-ts" x1="0.800" y1="0" x2="0.200" y2="1"><stop offset="0" stop-color="#4fd98a"/><stop offset=".35" stop-color="#2aa0e8"/><stop offset="1" stop-color="#1a78e0"/></linearGradient>
<symbol id="i-tbsearch" viewBox="0 0 22 22">
<circle cx="10" cy="10" r="7.300" fill="#5c5f5f" stroke="url(#g-ts)" stroke-width="2.100"/>
<path d="M15.500 15.500 L20 20" stroke="#1a78e0" stroke-width="2.300" stroke-linecap="round"/>
</symbol>
<linearGradient id="g-tv" x1="0" y1="0" x2="0.600" y2="1"><stop offset="0" stop-color="#ffffff"/><stop offset="1" stop-color="#d4d4d4"/></linearGradient>
<symbol id="i-taskview" viewBox="0 0 32 30">
<rect x="8.500" y="2" width="22.500" height="20" rx="2" fill="url(#g-tv)"/>
<rect x="1.200" y="10" width="22" height="19.700" rx="2" fill="#7c7c7c" opacity=".78"/>
</symbol>
<linearGradient id="g-sun" x1="0.300" y1="0" x2="0.600" y2="1"><stop offset="0" stop-color="#fbc835"/><stop offset="1" stop-color="#f27a12"/></linearGradient>
<linearGradient id="g-cloud" x1="0" y1="0" x2="0" y2="1"><stop offset="0" stop-color="#ffffff"/><stop offset="1" stop-color="#c3d8f2"/></linearGradient>
<symbol id="i-weather" viewBox="0 0 34 32">
<circle cx="15.400" cy="16" r="11.800" fill="url(#g-sun)"/>
<path d="M17 24.300 Q13.500 24.300 13.500 21.500 Q13.500 18.800 16.500 18.600 Q17.500 14.500 22 14.500 Q25.500 14.500 26.800 17.800 Q31 17.800 31 21 Q31 24.300 27.500 24.300 Z" fill="url(#g-cloud)"/>
</symbol>
<symbol id="i-net" viewBox="0 0 22 20">
<path d="M15 12 V15.300 H2.700 Q1.700 15.300 1.700 14.300 V2.800 Q1.700 1.800 2.700 1.800 H14" stroke="#fff" stroke-width="1.500" fill="none"/>
<path d="M6 15.500 V18.500 M11.500 15.500 V18.500 M4 18.700 H14" stroke="#fff" stroke-width="1.400" fill="none"/>
<rect x="15.700" y="1" width="4.600" height="7.300" rx="1" stroke="#fff" stroke-width="1.300" fill="none"/>
<path d="M18 8.300 V19.500 M16.500 3.300 H19.500" stroke="#fff" stroke-width="1.400"/>
</symbol>
<symbol id="i-vol" viewBox="0 0 22 18">
<path d="M1.500 6.500 H4.500 L8.500 2.800 V15.200 L4.500 11.500 H1.500 Q1 11.500 1 11 V7 Q1 6.500 1.500 6.500 Z" stroke="#fff" stroke-width="1.400" fill="none" stroke-linejoin="round"/>
<path d="M11.300 6.300 Q12.800 9 11.300 11.700 M13.800 4.300 Q16.600 9 13.800 13.700" stroke="#fff" stroke-width="1.400" fill="none" stroke-linecap="round"/>
<path d="M16.500 2.300 Q20.500 9 16.500 15.700" stroke="#777" stroke-width="1.300" fill="none" stroke-linecap="round"/>
</symbol>
<symbol id="i-bat" viewBox="0 0 22 18">
<rect x="1.700" y="3.700" width="16.600" height="12" rx="2.500" stroke="#fff" stroke-width="1.400" fill="none"/>
<path d="M7 5.800 H15.200 Q16.300 5.800 16.300 6.900 V12.500 Q16.300 13.600 15.200 13.600 H4.800 Q3.700 13.600 3.700 12.500 V10.500 Z" fill="#fff"/>
<path d="M18.800 7.200 H19.600 Q20.700 7.200 20.700 8.300 V11.100 Q20.700 12.200 19.600 12.200 H18.800 Z" fill="#fff"/>
<path d="M4.300 0.300 L1 6.300 H3.600 L2.200 11 L7 4.300 H4.200 L5.800 0.300 Z" fill="#fff" stroke="#1d2121" stroke-width=".8"/>
</symbol>
</defs></svg>
<div id="desk">
<div class="di" style="left:-2px;top:7px"><div class="ic"><svg viewBox="0 0 60 60"><use href="#i-recycle"/></svg></div><div class="lb"><span style="letter-spacing:-0.38px">Recycle Bin</span></div></div>
<div class="di" style="left:93px;top:7px"><div class="ic"><svg viewBox="0 0 60 60"><use href="#i-compmgmt"/></svg></div><div class="sc"><svg viewBox="0 0 18 18" width="17" height="17"><use href="#i-shortcut"/></svg></div><div class="lb"><span style="letter-spacing:0.05px">Computer</span><br><span style="letter-spacing:-0.30px">Manageme...</span></div></div>
<div class="di" style="left:188px;top:7px"><div class="ic"><svg viewBox="0 0 60 60"><use href="#i-prusa"/></svg></div><div class="sc"><svg viewBox="0 0 18 18" width="17" height="17"><use href="#i-shortcut"/></svg></div><div class="lb"><span style="letter-spacing:-0.54px">PrusaSlicer</span><br><span style="letter-spacing:-0.78px">2.9.2</span></div></div>
<div class="di" style="left:-2px;top:137px"><div class="ic"><svg viewBox="0 0 60 60"><use href="#i-brave"/></svg></div><div class="sc"><svg viewBox="0 0 18 18" width="17" height="17"><use href="#i-shortcut"/></svg></div><div class="lb"><span style="letter-spacing:-0.49px">Brave</span></div></div>
<div class="di" style="left:93px;top:137px"><div class="ic"><svg viewBox="0 0 60 60"><use href="#i-cpanel"/></svg></div><div class="sc"><svg viewBox="0 0 18 18" width="17" height="17"><use href="#i-shortcut"/></svg></div><div class="lb"><span style="letter-spacing:-0.24px">Control Panel</span></div></div>
<div class="di" style="left:188px;top:137px"><div class="ic"><svg viewBox="0 0 60 60"><use href="#i-gcode"/></svg></div><div class="sc"><svg viewBox="0 0 18 18" width="17" height="17"><use href="#i-shortcut"/></svg></div><div class="lb"><span style="letter-spacing:-0.40px">Prusa G-code</span><br><span style="letter-spacing:-0.18px">Viewer</span></div></div>
<div class="di" style="left:-2px;top:267px"><div class="ic"><svg viewBox="0 0 60 60"><use href="#i-firefox"/></svg></div><div class="sc"><svg viewBox="0 0 18 18" width="17" height="17"><use href="#i-shortcut"/></svg></div><div class="lb"><span style="letter-spacing:-0.12px">Firefox</span></div></div>
<div class="di" style="left:93px;top:267px"><div class="ic"><svg viewBox="0 0 60 60"><use href="#i-explorer"/></svg></div><div class="sc"><svg viewBox="0 0 18 18" width="17" height="17"><use href="#i-shortcut"/></svg></div><div class="lb"><span style="letter-spacing:-0.17px">File Explorer</span></div></div>
<div class="di" style="left:188px;top:267px"><div class="ic"><svg viewBox="0 0 60 60"><use href="#i-keepass"/></svg></div><div class="sc"><svg viewBox="0 0 18 18" width="17" height="17"><use href="#i-shortcut"/></svg></div><div class="lb"><span style="letter-spacing:-1.22px">KeePassXC....</span><br><span style="letter-spacing:-0.00px">- Shortcut</span></div></div>
<div class="di" style="left:-2px;top:397px"><div class="ic"><svg viewBox="0 0 60 60"><use href="#i-jtides"/></svg></div><div class="sc"><svg viewBox="0 0 18 18" width="17" height="17"><use href="#i-shortcut"/></svg></div><div class="lb"><span style="letter-spacing:-0.56px">JTides</span></div></div>
<div class="di" style="left:93px;top:397px"><div class="ic"><svg viewBox="0 0 60 60"><use href="#i-textdoc"/></svg></div><div class="lb"><span style="letter-spacing:-0.08px">New Text</span><br><span style="letter-spacing:0.03px">Document.txt</span></div></div>
<div class="di" style="left:-2px;top:527px"><div class="ic"><svg viewBox="0 0 60 60"><use href="#i-libre"/></svg></div><div class="sc"><svg viewBox="0 0 18 18" width="17" height="17"><use href="#i-shortcut"/></svg></div><div class="lb"><span style="letter-spacing:0.07px">LibreOffice</span><br><span style="letter-spacing:-0.55px">25.2</span></div></div>
<div class="di" style="left:93px;top:527px"><div class="ic"><svg viewBox="0 0 60 60"><use href="#i-solvespace"/></svg></div><div class="sc"><svg viewBox="0 0 18 18" width="17" height="17"><use href="#i-shortcut"/></svg></div><div class="lb"><span style="letter-spacing:-0.43px">SolveSpace</span></div></div>
<div class="di" style="left:-2px;top:657px"><div class="ic"><svg viewBox="0 0 60 60"><use href="#i-openshot"/></svg></div><div class="sc"><svg viewBox="0 0 18 18" width="17" height="17"><use href="#i-shortcut"/></svg></div><div class="lb"><span style="letter-spacing:-0.16px">OpenShot</span><br><span style="letter-spacing:0.13px">Video Editor</span></div></div>
<div class="di" style="left:93px;top:657px"><div class="ic"><svg viewBox="0 0 60 60"><use href="#i-syncback"/></svg></div><div class="sc"><svg viewBox="0 0 18 18" width="17" height="17"><use href="#i-shortcut"/></svg></div><div class="lb"><span style="letter-spacing:-0.73px">SyncBackFree</span></div></div>
<div class="di" style="left:-2px;top:787px"><div class="ic"><svg viewBox="0 0 60 60"><use href="#i-blender"/></svg></div><div class="sc"><svg viewBox="0 0 18 18" width="17" height="17"><use href="#i-shortcut"/></svg></div><div class="lb"><span style="letter-spacing:-0.36px">Blender 4.3</span></div></div>
<div class="di" style="left:93px;top:787px"><div class="ic"><svg viewBox="0 0 60 60"><use href="#i-vscode"/></svg></div><div class="sc"><svg viewBox="0 0 18 18" width="17" height="17"><use href="#i-shortcut"/></svg></div><div class="lb"><span style="letter-spacing:-0.15px">Visual Studio</span><br><span style="letter-spacing:-0.21px">Code</span></div></div>
<div class="di" style="left:-2px;top:917px"><div class="ic"><svg viewBox="0 0 60 60"><use href="#i-cmd"/></svg></div><div class="sc"><svg viewBox="0 0 18 18" width="17" height="17"><use href="#i-shortcut"/></svg></div><div class="lb"><span style="letter-spacing:-0.09px">Command</span><br><span style="letter-spacing:0.04px">Prompt</span></div></div>
<div class="di" style="left:93px;top:917px"><div class="ic"><svg viewBox="0 0 60 60"><use href="#i-pshell"/></svg></div><div class="sc"><svg viewBox="0 0 18 18" width="17" height="17"><use href="#i-shortcut"/></svg></div><div class="lb"><span style="letter-spacing:0.03px">Windows</span><br><span style="letter-spacing:-0.60px">PowerShell...</span></div></div>
<div id="panel"></div>
<div id="card"></div>
<svg class="abs" style="left:762px;top:136px" width="23" height="22" viewBox="0 0 23 22"><use href="#i-back"/></svg>
<div class="pill on" style="left:799px;width:50px"><span style="letter-spacing:-0.29px">All</span></div>
<div class="pill" style="left:853px;width:69px"><span style="letter-spacing:0.05px">Apps</span></div>
<div class="pill" style="left:926.4px;width:118.19999999999993px"><span style="letter-spacing:0.18px">Documents</span></div>
<div class="pill" style="left:1049px;width:64px"><span style="letter-spacing:-0.14px">Web</span></div>
<div class="pill" style="left:1118px;width:92px"><span style="letter-spacing:0.09px">Settings</span></div>
<div class="pill" style="left:1214px;width:87px"><span style="letter-spacing:-0.06px">Folders</span></div>
<div class="pill" style="left:1305px;width:47px;border-radius:20px 0 0 20px;border-right:none;text-align:left;padding-left:14px"><span style="letter-spacing:-0.17px">Photos</span></div>
<svg class="abs" style="left:1376px;top:139px" width="14" height="16" viewBox="0 0 16 18"><use href="#i-play"/></svg>
<div class="t" style="left:1439px;top:140.500px;font-size:15.500px;letter-spacing:-0.52px">135</div>
<svg class="abs" style="left:1476px;top:135px" width="22" height="24" viewBox="0 0 22 24"><use href="#i-trophy"/></svg>
<svg class="abs" style="left:1520px;top:133.500px" width="26" height="26" viewBox="0 0 26 26"><use href="#i-avatar"/></svg>
<svg class="abs" style="left:1570px;top:144px" width="18" height="6" viewBox="0 0 18 6"><use href="#i-dots"/></svg>
<svg class="abs" style="left:1608.500px;top:128px" width="37.600" height="37.600" viewBox="0 0 38 38"><use href="#i-copilot"/></svg>
<div class="t hd" style="left:758.5px;top:201.5px;letter-spacing:-0.53px">Best match</div>
<div class="abs" style="left:749px;top:236px;width:408px;height:78px;background:#3a3e3d;border-radius:5px"></div>
<div class="abs" style="left:749px;top:260px;width:3px;height:30px;background:#4cc2ff;border-radius:2px"></div>
<svg class="abs" style="left:762px;top:263px" width="27" height="22" viewBox="0 0 27 22"><use href="#i-cmdsm"/></svg>
<div class="t r1" style="left:800px;top:254.500px;letter-spacing:0.23px">Command Prompt</div>
<div class="t r2" style="left:800px;top:280px;letter-spacing:-0.15px">System</div>
<svg class="abs" style="left:766px;top:350px" width="20" height="20" viewBox="0 0 20 20"><use href="#i-search"/></svg>
<div class="t r1" style="left:800px;top:338px"><span style="letter-spacing:-0.34px">cmd.exe.</span> <b style="letter-spacing:0.00px">run as administrator</b></div>
<div class="t r2" style="left:800px;top:364px;letter-spacing:0.08px">See more search results</div>
<svg class="abs" style="left:1122px;top:351.600px" width="12" height="16" viewBox="0 0 12 16"><use href="#i-chev"/></svg>
<div class="t hd" style="left:761px;top:417.5px;letter-spacing:-0.38px">Search the web</div>
<svg class="abs" style="left:766px;top:465.8px" width="20" height="20" viewBox="0 0 20 20"><use href="#i-search"/></svg>
<div class="t r1" style="left:800px;top:467.7px"><span style="letter-spacing:-0.25px">cmd.exe</span><span class="r2" style="letter-spacing:0.16px"> - See more search results</span></div>
<svg class="abs" style="left:1122px;top:467.8px" width="12" height="16" viewBox="0 0 12 16"><use href="#i-chev"/></svg>
<svg class="abs" style="left:766px;top:517.35px" width="20" height="20" viewBox="0 0 20 20"><use href="#i-search"/></svg>
<div class="t r1" style="left:800px;top:519.25px"><span style="letter-spacing:-0.25px">cmd.exe</span> <b style="letter-spacing:0.08px">file</b></div>
<svg class="abs" style="left:1122px;top:519.35px" width="12" height="16" viewBox="0 0 12 16"><use href="#i-chev"/></svg>
<svg class="abs" style="left:766px;top:568.9px" width="20" height="20" viewBox="0 0 20 20"><use href="#i-search"/></svg>
<div class="t r1" style="left:800px;top:570.8px"><span style="letter-spacing:-0.25px">cmd.exe</span> <b style="letter-spacing:0.09px">command</b></div>
<svg class="abs" style="left:1122px;top:570.9px" width="12" height="16" viewBox="0 0 12 16"><use href="#i-chev"/></svg>
<svg class="abs" style="left:766px;top:620.45px" width="20" height="20" viewBox="0 0 20 20"><use href="#i-search"/></svg>
<div class="t r1" style="left:800px;top:622.35px"><span style="letter-spacing:-0.25px">cmd.exe</span> <b style="letter-spacing:-0.08px">for windows 10</b></div>
<svg class="abs" style="left:1122px;top:622.45px" width="12" height="16" viewBox="0 0 12 16"><use href="#i-chev"/></svg>
<svg class="abs" style="left:766px;top:672.0px" width="20" height="20" viewBox="0 0 20 20"><use href="#i-search"/></svg>
<div class="t r1" style="left:800px;top:673.9px"><span style="letter-spacing:-0.25px">cmd.exe</span> <b style="letter-spacing:0.61px">/admin</b></div>
<svg class="abs" style="left:1122px;top:674.0px" width="12" height="16" viewBox="0 0 12 16"><use href="#i-chev"/></svg>
<svg class="abs" style="left:766px;top:723.55px" width="20" height="20" viewBox="0 0 20 20"><use href="#i-search"/></svg>
<div class="t r1" style="left:800px;top:725.45px"><span style="letter-spacing:-0.25px">cmd.exe</span> <b style="letter-spacing:0.13px">startup</b></div>
<svg class="abs" style="left:1122px;top:725.55px" width="12" height="16" viewBox="0 0 12 16"><use href="#i-chev"/></svg>
<svg class="abs" style="left:766px;top:775.1px" width="20" height="20" viewBox="0 0 20 20"><use href="#i-search"/></svg>
<div class="t r1" style="left:800px;top:777.0px"><span style="letter-spacing:-0.25px">cmd.exe</span> <b style="letter-spacing:-0.06px">history</b></div>
<svg class="abs" style="left:1122px;top:777.1px" width="12" height="16" viewBox="0 0 12 16"><use href="#i-chev"/></svg>
<svg class="abs" style="left:766px;top:826.65px" width="20" height="20" viewBox="0 0 20 20"><use href="#i-search"/></svg>
<div class="t r1" style="left:800px;top:828.55px"><span style="letter-spacing:-0.25px">cmd.exe</span> <b style="letter-spacing:-0.17px">batch files</b></div>
<svg class="abs" style="left:1122px;top:828.65px" width="12" height="16" viewBox="0 0 12 16"><use href="#i-chev"/></svg>
<svg class="abs" style="left:1367px;top:230px" width="79" height="65" viewBox="0 0 79 65"><use href="#i-cmdlg"/></svg>
<div class="t" style="left:1206px;width:400px;text-align:center;top:329.500px;font-size:22.600px"><span style="letter-spacing:0.01px">Command Prompt</span></div>
<div class="t r2" style="left:1206px;width:400px;text-align:center;top:362.500px"><span style="letter-spacing:-0.14px">System</span></div>
<div class="abs" style="left:1189px;top:416px;width:435px;height:1px;background:#454848"></div>
<svg class="abs" style="left:1202.800px;top:442px" width="20" height="20" viewBox="0 0 20 20"><use href="#i-open"/></svg>
<div class="t act" style="left:1239px;top:444.5px;letter-spacing:-0.08px">Open</div>
<svg class="abs" style="left:1202.800px;top:481px" width="20" height="20" viewBox="0 0 20 20"><use href="#i-runas"/></svg>
<div class="t act" style="left:1239px;top:483.5px;letter-spacing:-0.09px">Run as administrator</div>
<svg class="abs" style="left:1202.800px;top:520px" width="20" height="20" viewBox="0 0 20 20"><use href="#i-folder"/></svg>
<div class="t act" style="left:1239px;top:522.5px;letter-spacing:0.08px">Open file location</div>
<svg class="abs" style="left:1200.600px;top:556.7px" width="24" height="24" viewBox="0 0 20 20"><use href="#i-unpin"/></svg>
<div class="t act" style="left:1239px;top:561.5px;letter-spacing:0.07px">Unpin from Start</div>
<svg class="abs" style="left:1200.600px;top:595.7px" width="24" height="24" viewBox="0 0 20 20"><use href="#i-unpin"/></svg>
<div class="t act" style="left:1239px;top:600.5px;letter-spacing:0.02px">Unpin from taskbar</div>
<div id="tb"></div>
<svg class="abs" style="left:24px;top:1033px" width="34" height="32" viewBox="0 0 34 32"><use href="#i-weather"/></svg>
<div class="t tt" style="left:64.5px;top:1032.500px;letter-spacing:-0.32px">54°F</div>
<div class="t tt" style="left:64.5px;top:1052.500px;color:#cfd0d0;letter-spacing:0.36px">Mostly sunny</div>
<svg class="abs" style="left:666.700px;top:1034.500px" width="29.600" height="31" viewBox="0 0 30 30"><use href="#i-start"/></svg>
<div id="sbox"></div>
<svg class="abs" style="left:726px;top:1039px" width="22" height="22" viewBox="0 0 22 22"><use href="#i-tbsearch"/></svg>
<div class="t" style="left:759.5px;top:1041px;font-size:17px;letter-spacing:-0.14px">cmd.exe</div>
<svg class="abs" style="left:1002px;top:1034px" width="32" height="30" viewBox="0 0 32 30"><use href="#i-taskview"/></svg>
<svg class="abs" style="left:1058px;top:1035.500px" width="29" height="29" viewBox="0 0 38 38"><use href="#i-copilot"/></svg>
<svg class="abs" style="left:1112.3px;top:1034.5px" width="30" height="30" viewBox="0 0 60 60"><use href="#i-explorer"/></svg>
<svg class="abs" style="left:1166.8px;top:1034.8px" width="30" height="30" viewBox="0 0 60 60"><use href="#i-brave"/></svg>
<svg class="abs" style="left:1223.5px;top:1038px" width="27.500" height="22.300" viewBox="0 0 27 22"><use href="#i-cmdsm"/></svg>
<svg class="abs" style="left:1688px;top:1045px" width="15" height="10" viewBox="0 0 15 10"><use href="#i-trayup"/></svg>
<svg class="abs" style="left:1725px;top:1040px" width="22" height="20" viewBox="0 0 22 20"><use href="#i-net"/></svg>
<svg class="abs" style="left:1755px;top:1041px" width="22" height="18" viewBox="0 0 22 18"><use href="#i-vol"/></svg>
<svg class="abs" style="left:1785px;top:1040px" width="22" height="18" viewBox="0 0 22 18"><use href="#i-bat"/></svg>
<div class="t tt" style="right:24.5px;top:1032.500px;text-align:right;letter-spacing:-0.14px">00:20</div>
<div class="t tt" style="right:24.5px;top:1052.500px;text-align:right;letter-spacing:0.40px">7/29/2025</div>
<svg class="abs" style="left:0;top:0;pointer-events:none" width="1920" height="1080" viewBox="0 0 1920 1080" fill="none" stroke="#ff0000" stroke-linecap="round" stroke-linejoin="round">
<path d="M1390.500 377.500 L1296 425" stroke-width="16.500"/>
<path d="M1300.700 400.500 L1296 414 L1291 426" stroke-width="12.500"/>
<path d="M1291.500 427 L1310 434 L1328.500 439.500" stroke-width="15.500"/>
<path d="M546 923.500 L562 937 L578.500 947.500 L623.700 968.700 L662.600 983.600 L706 1001" stroke-width="17"/>
<path d="M702 964.500 L706 985 L711.500 1003" stroke-width="17.500"/>
<path d="M649.500 1020.500 C668 1013 690 1012 709 1004.500" stroke-width="21.500"/>
</svg>

</div>
</body></html>
